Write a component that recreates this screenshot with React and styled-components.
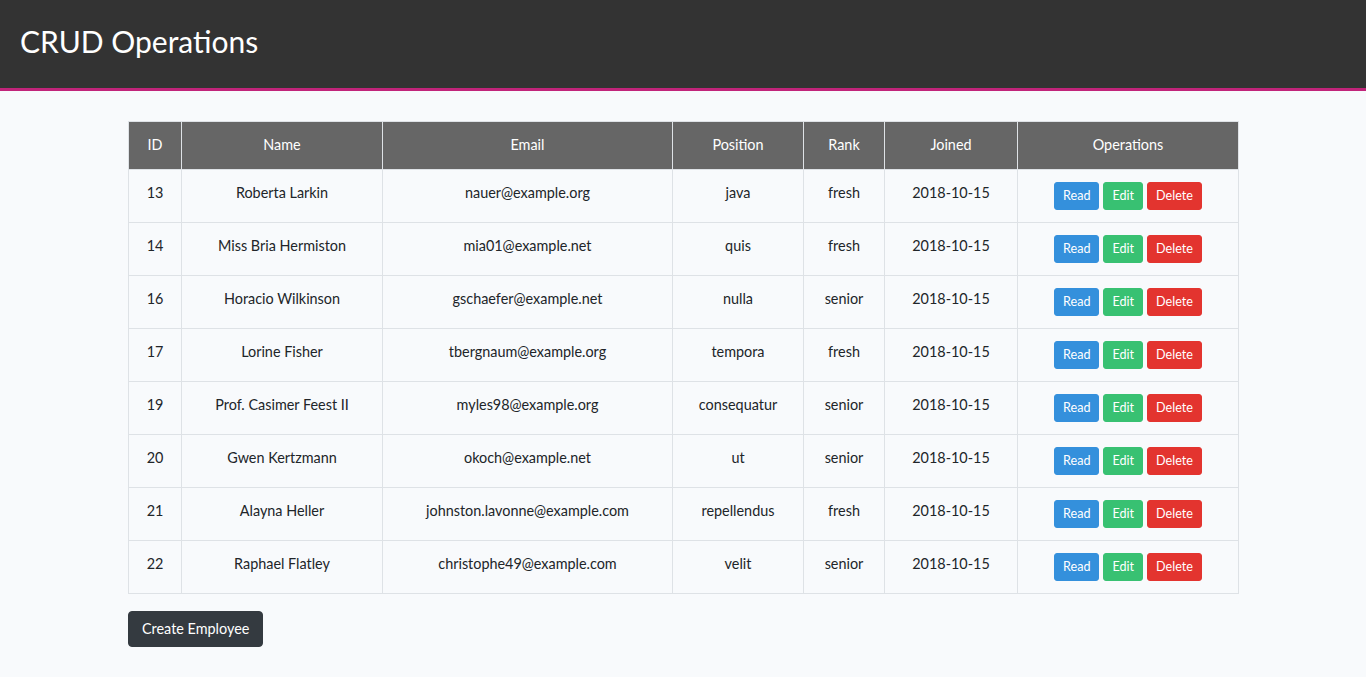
import React from 'react';
import styled, { createGlobalStyle } from 'styled-components';

const GlobalStyle = createGlobalStyle`
  body {
    margin: 0;
    background-color: #f8fafc;
    font-family: 'Lato', 'Noto Sans', sans-serif;
    font-size: 14.4px;
    line-height: 1.5;
    color: #212529;
  }
`;

const Header = styled.header`
  height: 91px;
  box-sizing: border-box;
  background-color: #333333;
  border-bottom: 3px solid #c1247a;
  display: flex;
  align-items: center;
  padding: 0 20px 5px;
`;

const Title = styled.h1`
  margin: 0;
  color: #ffffff;
  font-size: 30px;
  font-weight: 400;
`;

const Container = styled.main`
  width: 1110px;
  margin: 0 auto;
  padding-top: 30px;
`;

const Table = styled.table`
  width: 100%;
  table-layout: fixed;
  border-collapse: collapse;
  margin-bottom: 17px;
  border: 1px solid #dee2e6;
`;

const Th = styled.th`
  background-color: #666666;
  color: #ffffff;
  font-weight: 400;
  padding: 12px 12px 13px;
  text-align: center;
  vertical-align: bottom;
  border: 1px solid #dee2e6;
`;

const Td = styled.td`
  padding: 12px;
  text-align: center;
  vertical-align: top;
  border: 1px solid #dee2e6;
  white-space: nowrap;
`;

const Ops = styled.div`
  display: flex;
  justify-content: center;
  gap: 4px;
`;

const SmallButton = styled.button`
  font-family: inherit;
  font-size: 12.6px;
  line-height: 18px;
  padding: 4px 8px;
  border: 1px solid ${(p) => p.$color};
  background-color: ${(p) => p.$color};
  color: #ffffff;
  border-radius: 3px;
  cursor: pointer;
`;

const CreateButton = styled.button`
  font-family: inherit;
  font-size: 14.4px;
  line-height: 22px;
  padding: 6px 13px;
  height: 36px;
  background-color: #343a40;
  border: 1px solid #343a40;
  color: #ffffff;
  border-radius: 4px;
  cursor: pointer;
`;

const columns = [
  { label: 'ID', width: 53 },
  { label: 'Name', width: 201 },
  { label: 'Email', width: 290 },
  { label: 'Position', width: 131 },
  { label: 'Rank', width: 81 },
  { label: 'Joined', width: 133 },
  { label: 'Operations', width: 221 },
];

const employees = [
  [13, 'Roberta Larkin', 'nauer@example.org', 'java', 'fresh'],
  [14, 'Miss Bria Hermiston', 'mia01@example.net', 'quis', 'fresh'],
  [16, 'Horacio Wilkinson', 'gschaefer@example.net', 'nulla', 'senior'],
  [17, 'Lorine Fisher', 'tbergnaum@example.org', 'tempora', 'fresh'],
  [19, 'Prof. Casimer Feest II', 'myles98@example.org', 'consequatur', 'senior'],
  [20, 'Gwen Kertzmann', 'okoch@example.net', 'ut', 'senior'],
  [21, 'Alayna Heller', 'johnston.lavonne@example.com', 'repellendus', 'fresh'],
  [22, 'Raphael Flatley', 'christophe49@example.com', 'velit', 'senior'],
];

const App = () => (
  <>
    <GlobalStyle />
    <Header>
      <Title>CRUD Operations</Title>
    </Header>
    <Container>
      <Table>
        <colgroup>
          {columns.map((c) => (
            <col key={c.label} style={{ width: c.width }} />
          ))}
        </colgroup>
        <thead>
          <tr>
            {columns.map((c) => (
              <Th key={c.label}>{c.label}</Th>
            ))}
          </tr>
        </thead>
        <tbody>
          {employees.map(([id, name, email, position, rank]) => (
            <tr key={id}>
              <Td>{id}</Td>
              <Td>{name}</Td>
              <Td>{email}</Td>
              <Td>{position}</Td>
              <Td>{rank}</Td>
              <Td>2018-10-15</Td>
              <Td>
                <Ops>
                  <SmallButton $color="#3490dc">Read</SmallButton>
                  <SmallButton $color="#38c172">Edit</SmallButton>
                  <SmallButton $color="#e3342f">Delete</SmallButton>
                </Ops>
              </Td>
            </tr>
          ))}
        </tbody>
      </Table>
      <CreateButton>Create Employee</CreateButton>
    </Container>
  </>
);

export default App;
